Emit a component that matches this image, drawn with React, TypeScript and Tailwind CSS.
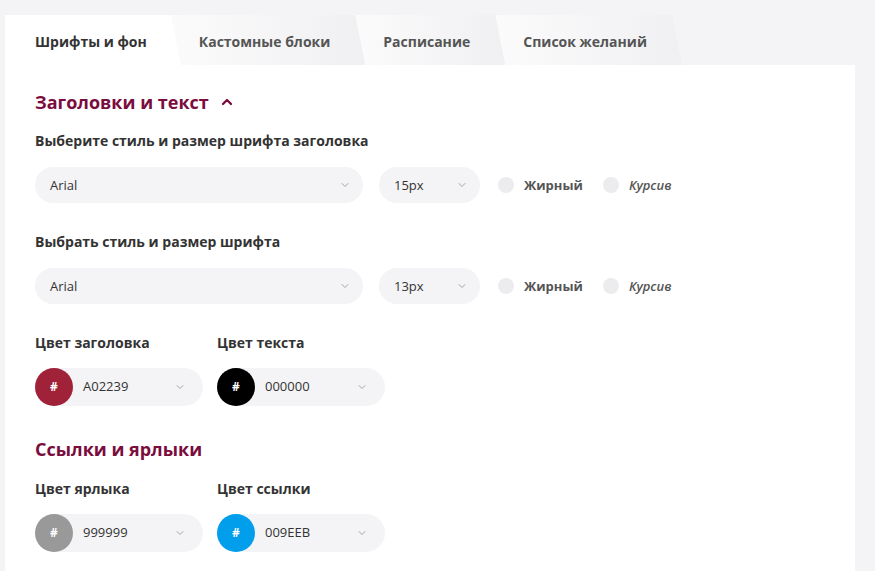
import { ChevronDown, ChevronUp } from "lucide-react";

const tabs = ["Шрифты и фон", "Кастомные блоки", "Расписание", "Список желаний"];

function Select({ value, width }: { value: string; width: string }) {
  return (
    <div className={`${width} h-9 rounded-full bg-[#f4f4f6] flex items-center justify-between pl-[15px] pr-[12px]`}>
      <span className="text-[13px] text-[#333] pt-px">{value}</span>
      <ChevronDown size={12} strokeWidth={2} className="text-[#a5a5a8]" />
    </div>
  );
}

function Check({ label, italic }: { label: string; italic?: boolean }) {
  return (
    <div className="flex items-center gap-[10px]">
      <span className="w-4 h-4 rounded-full bg-[#ececee]" />
      <span className={italic ? "text-[13px] italic font-semibold text-[#555] pt-px" : "text-[13px] font-bold text-[#555] pt-px"}>{label}</span>
    </div>
  );
}

function FontRow({ size }: { size: string }) {
  return (
    <div className="flex items-center">
      <Select value="Arial" width="w-[328px]" />
      <div className="ml-4">
        <Select value={size} width="w-[101px]" />
      </div>
      <div className="ml-[18px] flex items-center gap-[20px]">
        <Check label="Жирный" />
        <Check label="Курсив" italic />
      </div>
    </div>
  );
}

function ColorPicker({ label, hex, color }: { label: string; hex: string; color: string }) {
  return (
    <div className="flex flex-col">
      <div className="text-sm font-bold text-[#333] leading-5">{label}</div>
      <div className="mt-[15px] w-[168px] h-[38px] rounded-full bg-[#f4f4f6] flex items-center pr-[17px]">
        <span
          className="w-[38px] h-[38px] rounded-full flex items-center justify-center text-white text-xs font-bold"
          style={{ backgroundColor: color }}
        >
          #
        </span>
        <span className="ml-[10px] text-[13px] text-[#333] flex-1">{hex}</span>
        <ChevronDown size={12} strokeWidth={2} className="text-[#a5a5a8]" />
      </div>
    </div>
  );
}

export default function App() {
  return (
    <div className="min-h-[571px] bg-[#f4f4f6] pt-[15px] pl-[5px] font-['Open_Sans',sans-serif]">
      {/* tabs */}
      <div className="flex h-[50px]">
        {tabs.map((t, i) => (
          <div
            key={t}
            className={
              i === 0
                ? "relative flex items-center pt-[2px] pl-[30px] pr-[34px] bg-white [clip-path:polygon(0_0,calc(100%-10px)_0,100%_100%,0_100%)] text-[14px] font-bold text-[#333]"
                : "relative flex items-center pt-[2px] -ml-[10px] pl-[28px] pr-[35px] bg-linear-to-r from-[#fbfbfc] to-[#f0f0f2] [clip-path:polygon(0_0,calc(100%-10px)_0,100%_100%,0_100%)] text-[14px] font-bold text-[#555]"
            }
            style={{ zIndex: 10 - i }}
          >
            {t}
          </div>
        ))}
      </div>

      {/* panel */}
      <div className="w-[850px] bg-white pl-[30px] pt-6 pb-6 min-h-[506px]">
        <div className="flex items-center gap-[10px] text-[18px] leading-[26px] font-bold text-[#7a0c3e]">
          Заголовки и текст
          <ChevronUp size={16} strokeWidth={3.5} />
        </div>

        <div className="mt-4 text-sm font-bold text-[#333] leading-5">Выберите стиль и размер шрифта заголовка</div>
        <div className="mt-4">
          <FontRow size="15px" />
        </div>

        <div className="mt-[29px] text-sm font-bold text-[#333] leading-5">Выбрать стиль и размер шрифта</div>
        <div className="mt-4">
          <FontRow size="13px" />
        </div>

        <div className="mt-[29px] flex gap-[14px]">
          <ColorPicker label="Цвет заголовка" hex="A02239" color="#a02239" />
          <ColorPicker label="Цвет текста" hex="000000" color="#000000" />
        </div>

        <div className="mt-[30px] text-[18px] leading-[26px] font-bold text-[#7a0c3e]">Ссылки и ярлыки</div>

        <div className="mt-[17px] flex gap-[14px]">
          <ColorPicker label="Цвет ярлыка" hex="999999" color="#999999" />
          <ColorPicker label="Цвет ссылки" hex="009EEB" color="#009eeb" />
        </div>
      </div>
    </div>
  );
}
